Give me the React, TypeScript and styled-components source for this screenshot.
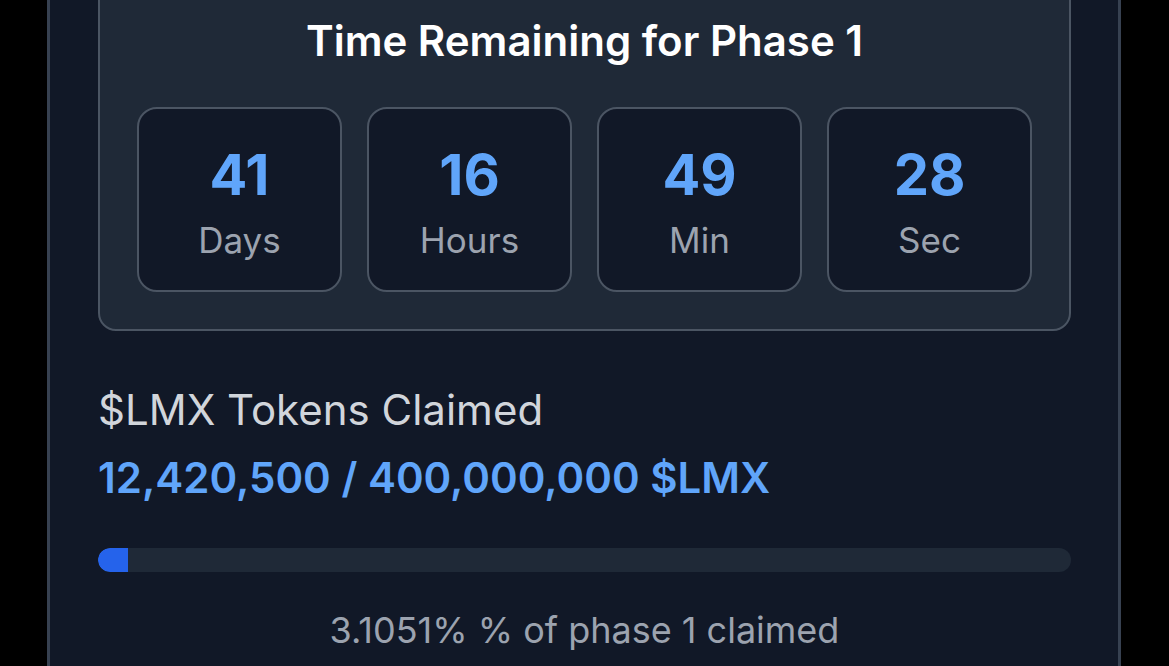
import React from "react";
import styled, { createGlobalStyle } from "styled-components";

const Global = createGlobalStyle`
  html, body { margin: 0; padding: 0; background: #000; }
  body { font-family: Inter, "Noto Sans", sans-serif; overflow: hidden; }
  #root { width: 1169px; height: 666px; overflow: hidden; }
`;

const Page = styled.div`
  display: flex;
  justify-content: center;
  width: 1169px;
  height: 666px;
  overflow: hidden;
`;

const Card = styled.div`
  box-sizing: border-box;
  width: 1074px;
  margin-left: -1px;
  margin-top: -73px;
  background: #111827;
  border: 3px solid #374151;
  border-radius: 24px;
  padding: 48px 47px 48px 48px;
  display: flex;
  flex-direction: column;
  flex-shrink: 0;
  align-self: flex-start;
`;

const TimerPanel = styled.div`
  background: #1f2937;
  border: 2px solid #4b5563;
  border-radius: 18px;
  padding: 37px;
`;

const Title = styled.h2`
  margin: 0 0 42px;
  text-align: center;
  color: #ffffff;
  font-size: 42px;
  line-height: 48px;
  font-weight: 600;
`;

const Grid = styled.div`
  display: grid;
  grid-template-columns: repeat(4, 1fr);
  gap: 25px;
`;

const TimeBox = styled.div`
  box-sizing: border-box;
  height: 185px;
  padding-top: 7px;
  background: #111827;
  border: 2px solid #4b5563;
  border-radius: 20px;
  display: flex;
  flex-direction: column;
  align-items: center;
  justify-content: center;
`;

const TimeValue = styled.div`
  color: #60a5fa;
  font-size: 56px;
  line-height: 56px;
  font-weight: 700;
`;

const TimeLabel = styled.div`
  color: #9ca3af;
  font-size: 35px;
  line-height: 40px;
  margin-top: 17px;
`;

const Section = styled.div`
  margin-top: 54px;
  display: flex;
  flex-direction: column;
`;

const ClaimLabel = styled.div`
  color: #d1d5db;
  font-size: 42px;
  line-height: 50px;
`;

const ClaimValue = styled.div`
  margin-top: 18px;
  color: #60a5fa;
  font-size: 42px;
  line-height: 50px;
  font-weight: 600;
`;

const Track = styled.div`
  margin-top: 45px;
  height: 24px;
  background: #1f2937;
  border-radius: 12px;
  overflow: hidden;
`;

const Fill = styled.div`
  height: 100%;
  background: #2563eb;
  border-radius: 12px 0 0 12px;
`;

const Caption = styled.div`
  margin-top: 36px;
  text-align: center;
  color: #9ca3af;
  font-size: 36px;
  line-height: 44px;
`;

const units = [
  { v: "41", l: "Days" },
  { v: "16", l: "Hours" },
  { v: "49", l: "Min" },
  { v: "28", l: "Sec" },
];

export default function App() {
  const pct = 3.1051;
  return (
    <>
      <Global />
      <Page>
        <Card>
          <TimerPanel>
            <Title>Time Remaining for Phase 1</Title>
            <Grid>
              {units.map((u) => (
                <TimeBox key={u.l}>
                  <TimeValue>{u.v}</TimeValue>
                  <TimeLabel>{u.l}</TimeLabel>
                </TimeBox>
              ))}
            </Grid>
          </TimerPanel>
          <Section>
            <ClaimLabel>$LMX Tokens Claimed</ClaimLabel>
            <ClaimValue>12,420,500 / 400,000,000 $LMX</ClaimValue>
            <Track>
              <Fill style={{ width: `${pct}%` }} />
            </Track>
            <Caption>3.1051% % of phase 1 claimed</Caption>
          </Section>
        </Card>
      </Page>
    </>
  );
}
